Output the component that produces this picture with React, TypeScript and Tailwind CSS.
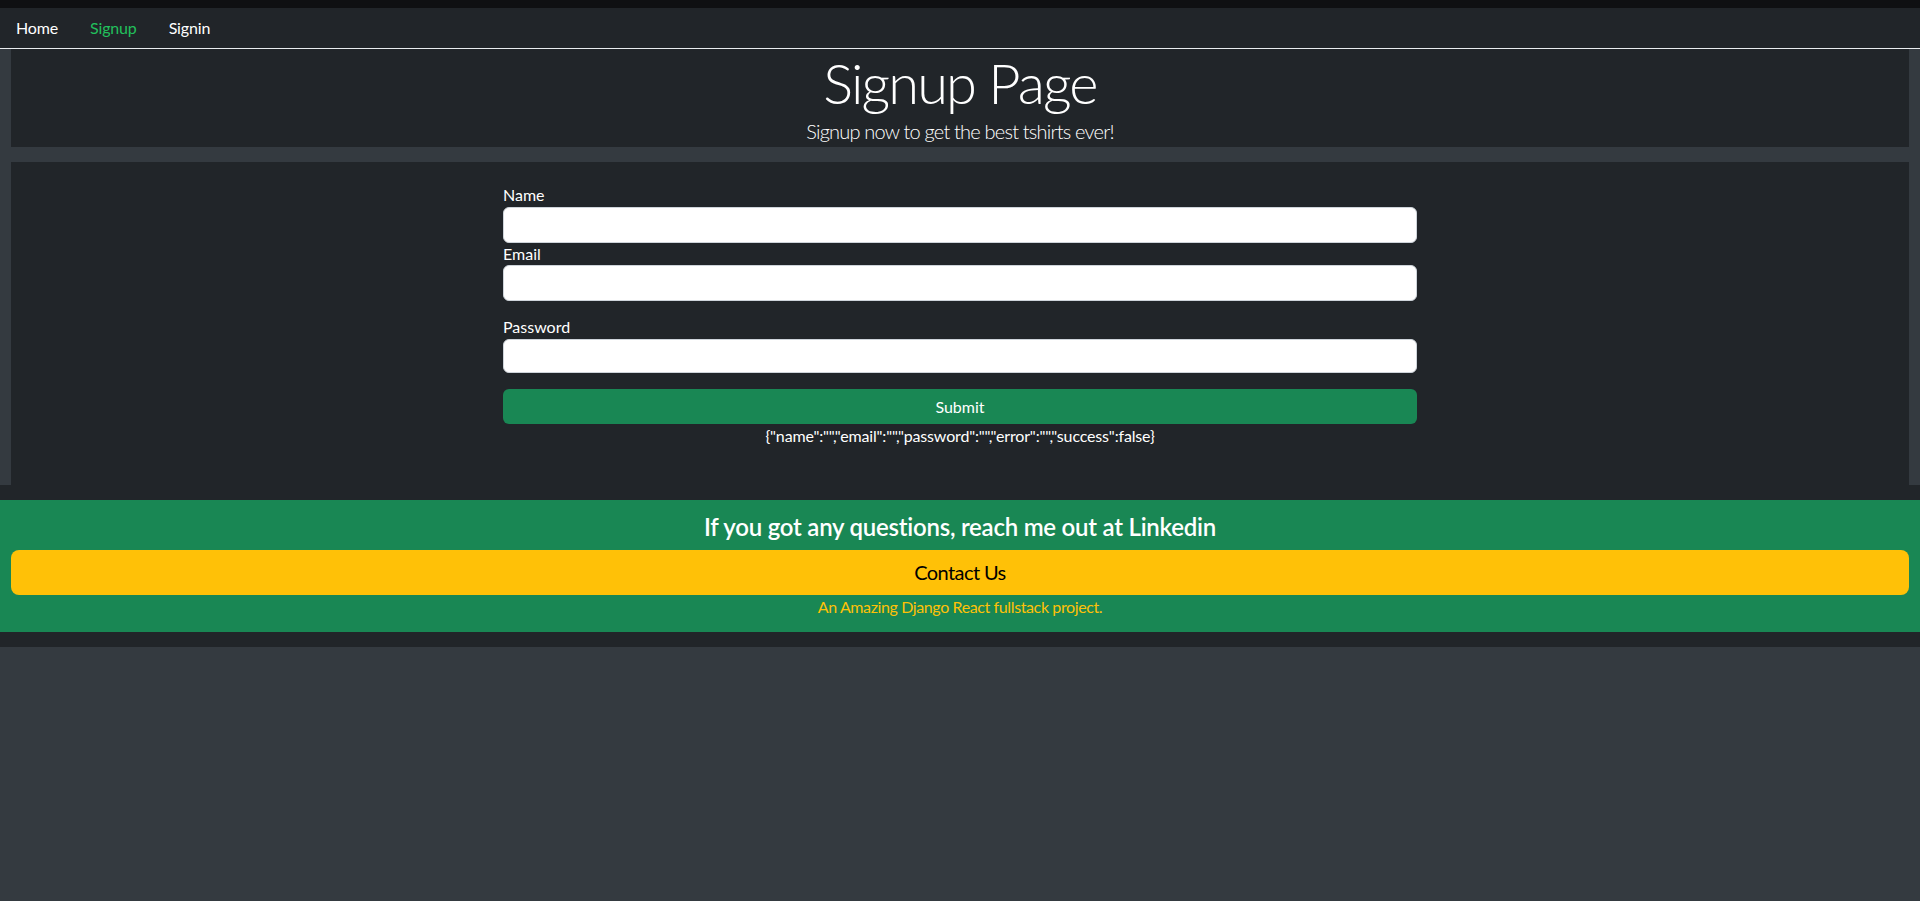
import { useState } from "react";

export default function App() {
  const [values] = useState({
    name: "",
    email: "",
    password: "",
    error: "",
    success: false,
  });

  return (
    <div className="min-h-screen bg-[#343a40] font-['Lato',sans-serif] text-white">
      {/* window strip */}
      <div className="h-2 bg-[#0f1012]" />

      {/* Menu */}
      <nav className="flex h-[41px] items-center border-b border-[#e9ecef] bg-[#212529] text-base">
        <a href="#" className="px-4 tracking-[-0.01em] text-white">
          Home
        </a>
        <a href="#" className="px-4 tracking-[-0.01em] text-[#22c05c]">
          Signup
        </a>
        <a href="#" className="px-4 tracking-[-0.01em] text-white">
          Signin
        </a>
      </nav>

      <div className="px-[11px]">
        {/* Jumbotron */}
        <div className="h-[98px] bg-[#212529] text-center">
          <h2 className="text-[56px] font-light leading-[1.2] tracking-[-0.034em]">Signup Page</h2>
          <p className="text-xl font-light leading-[30px] tracking-[-0.04em] text-white">
            Signup now to get the best tshirts ever!
          </p>
        </div>

        {/* Form */}
        <div className="mt-[15px] bg-[#212529] pb-[37px] pt-[21px]">
          <form className="mx-auto w-[914px]" onSubmit={(e) => e.preventDefault()}>
            <label className="block leading-6">Name</label>
            <input type="text" className="block h-9 w-full rounded-md border border-[#ced4da] bg-white px-3 text-black" />

            <label className="block leading-[22px]">Email</label>
            <input type="email" className="block h-9 w-full rounded-md border border-[#ced4da] bg-white px-3 text-black" />

            <label className="mt-[14px] block leading-6">Password</label>
            <input type="password" className="block h-[34px] w-full rounded-md border border-[#ced4da] bg-white px-3 text-black" />

            <button type="submit" className="mt-4 block h-[35px] w-full rounded-md bg-[#198754] text-white">
              Submit
            </button>
          </form>
          <p className="text-center leading-6 tracking-[-0.01em]">{JSON.stringify(values)}</p>
        </div>
      </div>

      {/* Footer */}
      <footer className="bg-[#212529] py-[15px]">
        <div className="bg-[#198754] px-[11px] pb-[13px] pt-[13px] text-center">
          <h4 className="mb-2 text-2xl font-semibold leading-[1.2] tracking-[-0.01em]">
            If you got any questions, reach me out at Linkedin
          </h4>
          <button className="h-[45px] w-full rounded-lg bg-[#ffc107] text-xl tracking-[-0.03em] text-black">
            Contact Us
          </button>
          <span className="block leading-6 tracking-[-0.024em] text-[#ffc107]">
            An Amazing Django React fullstack project.
          </span>
        </div>
      </footer>
    </div>
  );
}
